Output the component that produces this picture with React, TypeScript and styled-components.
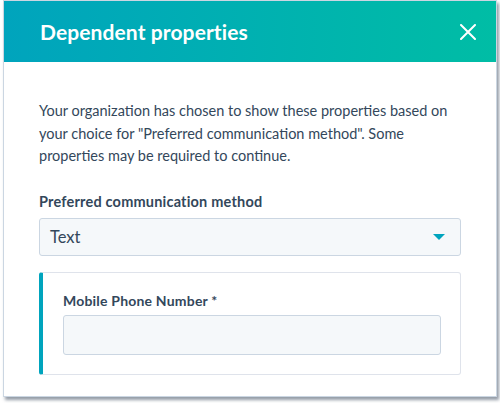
import React from 'react';
import styled, { createGlobalStyle } from 'styled-components';

const GlobalStyle = createGlobalStyle`
  html, body {
    margin: 0;
    padding: 0;
    background: #ffffff;
  }
  * {
    box-sizing: border-box;
  }
`;

const Page = styled.div`
  padding: 0 3px 6px 3px;
  font-family: Lato, 'Liberation Sans', sans-serif;
  color: #33475b;
`;

const Dialog = styled.div`
  width: 494px;
  height: 397px;
  background: #ffffff;
  border: 1px solid #cbd6e2;
  box-shadow: 2px 3px 3px rgba(60, 75, 95, 0.55);
  display: flex;
  flex-direction: column;
  overflow: hidden;
`;

const Header = styled.header`
  height: 61px;
  flex-shrink: 0;
  display: flex;
  align-items: center;
  justify-content: space-between;
  padding: 0 16px 0 36px;
  background: linear-gradient(90deg, #00a4bd 0%, #00bda5 100%);
`;

const Title = styled.h1`
  margin: 0;
  font-size: 21px;
  font-weight: 700;
  color: #ffffff;
  letter-spacing: 0.1px;
`;

const CloseButton = styled.button`
  width: 24px;
  height: 24px;
  padding: 0;
  border: none;
  background: transparent;
  display: flex;
  align-items: center;
  justify-content: center;
  cursor: pointer;
`;

const Body = styled.div`
  padding: 38px 35px 0 35px;
  display: flex;
  flex-direction: column;
`;

const Intro = styled.p`
  margin: 0 0 23px;
  font-size: 14.5px;
  line-height: 22.5px;
  color: #33475b;
  white-space: nowrap;
`;

const Label = styled.label<{ small?: boolean }>`
  display: block;
  font-size: ${({ small }) => (small ? '14px' : '14.5px')};
  font-weight: 700;
  line-height: 22px;
  color: #33475b;
  letter-spacing: 0.2px;
  margin-bottom: ${({ small }) => (small ? '3px' : '5px')};
`;

const Select = styled.div`
  height: 38px;
  display: flex;
  align-items: center;
  justify-content: space-between;
  padding: 0 15px 0 10px;
  background: #f5f8fa;
  border: 1px solid #cbd6e2;
  border-radius: 3px;
  font-size: 16.5px;
  color: #33475b;
`;

const Caret = styled.span`
  width: 0;
  height: 0;
  border-left: 6px solid transparent;
  border-right: 6px solid transparent;
  border-top: 6px solid #00a4bd;
`;

const DependentCard = styled.div`
  margin-top: 16px;
  border: 1px solid #dfe3eb;
  border-left: 4px solid #00a4bd;
  border-radius: 3px;
  padding: 17px 19px 19px 20px;
`;

const TextInput = styled.input`
  display: block;
  width: 100%;
  height: 40px;
  background: #f5f8fa;
  border: 1px solid #cbd6e2;
  border-radius: 3px;
  outline: none;
`;

export default function App() {
  return (
    <>
      <GlobalStyle />
      <Page>
        <Dialog>
          <Header>
            <Title>Dependent properties</Title>
            <CloseButton aria-label="Close">
              <svg width="16" height="16" viewBox="0 0 16 16">
                <path d="M1 1 L15 15 M15 1 L1 15" stroke="#ffffff" strokeWidth="2" strokeLinecap="round" />
              </svg>
            </CloseButton>
          </Header>
          <Body>
            <Intro>
              Your organization has chosen to show these properties based on
              <br />
              your choice for "Preferred communication method". Some
              <br />
              properties may be required to continue.
            </Intro>
            <Label>Preferred communication method</Label>
            <Select>
              <span>Text</span>
              <Caret />
            </Select>
            <DependentCard>
              <Label small>Mobile Phone Number *</Label>
              <TextInput />
            </DependentCard>
          </Body>
        </Dialog>
      </Page>
    </>
  );
}
